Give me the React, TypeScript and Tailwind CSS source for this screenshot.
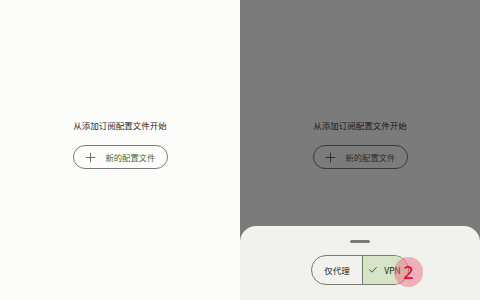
import { Check, Plus } from 'lucide-react';

const font = { fontFamily: '"Noto Sans CJK SC", "Noto Sans", sans-serif' };

function EmptyState({ dim }: { dim?: boolean }) {
  return (
    <div className="flex flex-col items-center pt-[119px]">
      <p className={`text-[8.5px] leading-[12px] ${dim ? 'text-[#1a1a1a]' : 'text-[#2b2b2b]'}`}>
        从添加订阅配置文件开始
      </p>
      <button
        className={`mt-[14px] flex h-[24px] w-[95px] items-center rounded-full border pl-[9px] ${
          dim ? 'border-[#3a3a3a] text-[#2c2c2a]' : 'border-[#7a7a77] text-[#4a6a3e]'
        }`}
      >
        <Plus size={15} strokeWidth={1.3} className={dim ? 'text-[#1f1f1f]' : 'text-[#3f5f34]'} />
        <span className="ml-[8px] text-[8.3px] leading-none">新的配置文件</span>
      </button>
    </div>
  );
}

export default function App() {
  return (
    <main className="flex h-[300px] w-[480px] overflow-hidden" style={font}>
      {/* 左侧：正常页面 */}
      <section className="h-full w-[240px] bg-[#fcfcfa]">
        <EmptyState />
      </section>

      {/* 右侧：底部弹窗 + 遮罩 */}
      <section className="relative h-full w-[240px] bg-[#7b7b7b]">
        <EmptyState dim />

        <div className="absolute inset-x-0 bottom-0 flex h-[74px] flex-col items-center rounded-t-[16px] bg-[#f1f2ee]">
          <div className="mt-[14px] h-[3px] w-[20px] rounded-full bg-[#7a7a78]" />
          <div className="mt-[12px] flex h-[30px] w-[98px] overflow-hidden rounded-full border border-[#78786f]">
            <div className="flex w-[50px] items-center justify-center text-[8.5px] text-[#222]">仅代理</div>
            <div className="flex flex-1 items-center justify-center gap-[6px] border-l border-[#78786f] bg-[#d6e5c6] pr-[2px] text-[8.5px] text-[#222]">
              <Check size={10} strokeWidth={2} />
              <span>VPN</span>
            </div>
          </div>
        </div>

        {/* 标注 */}
        <div className="absolute left-[154px] top-[257px] flex h-[30px] w-[29px] items-center justify-center rounded-full bg-[rgba(240,95,120,0.45)]">
          <span
            className="text-[18px] font-medium leading-none text-[#e0102c]"
            style={{ fontFamily: '"Noto Sans", sans-serif' }}
          >
            2
          </span>
        </div>
      </section>
    </main>
  );
}
